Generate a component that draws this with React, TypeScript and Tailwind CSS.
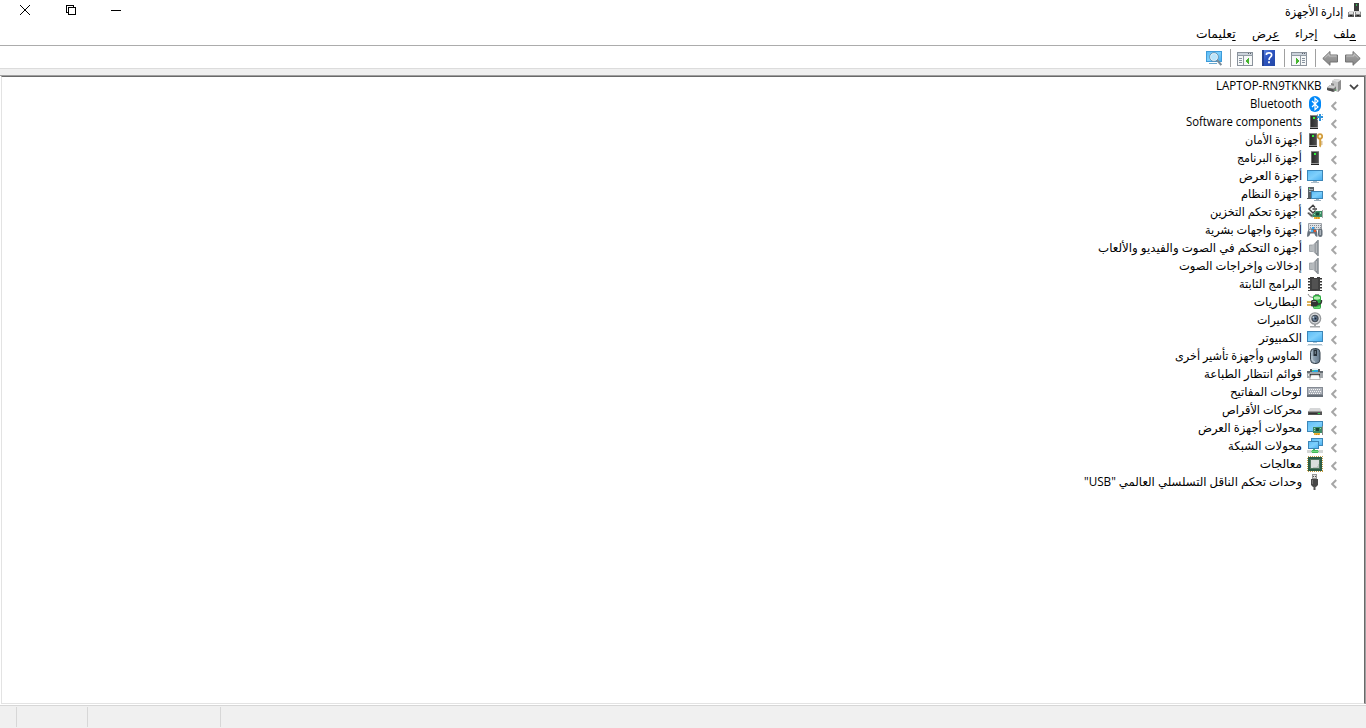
import { useLayoutEffect, useRef, useState, type ReactNode } from 'react';

/* Text that is condensed or widened to fill a known width. */
function Fit({ width, children }: { width: number; children: ReactNode }) {
  const ref = useRef<HTMLSpanElement>(null);
  const [scale, setScale] = useState(1);
  useLayoutEffect(() => {
    if (ref.current) setScale(width / ref.current.offsetWidth);
  }, [width]);
  return (
    <span className="block shrink-0" style={{ width }}>
      <span ref={ref} className="inline-block origin-right whitespace-nowrap" style={{ transform: `scaleX(${scale})` }}>
        {children}
      </span>
    </span>
  );
}

function Icon({ children, crisp = false }: { children: ReactNode; crisp?: boolean }) {
  return (
    <svg width="16" height="16" viewBox="0 0 16 16" fill="none" className="block shrink-0" shapeRendering={crisp ? 'crispEdges' : 'auto'}>
      {children}
    </svg>
  );
}

function Defs() {
  return (
    <svg width="0" height="0" className="absolute">
      <defs>
        <linearGradient id="screen" x1="0" y1="0" x2="1" y2="1">
          <stop offset="0" stopColor="#5cbcf6" />
          <stop offset=".5" stopColor="#7fd0fc" />
          <stop offset="1" stopColor="#45adf0" />
        </linearGradient>
        <linearGradient id="metal" x1="0" y1="0" x2="1" y2="0">
          <stop offset="0" stopColor="#c6cacd" />
          <stop offset=".6" stopColor="#989da2" />
          <stop offset="1" stopColor="#6d7479" />
        </linearGradient>
        <linearGradient id="tower" x1="0" y1="0" x2="1" y2="0">
          <stop offset="0" stopColor="#2c2c2c" />
          <stop offset="1" stopColor="#4a4a4a" />
        </linearGradient>
        <linearGradient id="help" x1="0" y1="0" x2="1" y2="1">
          <stop offset="0" stopColor="#668ce9" />
          <stop offset=".45" stopColor="#2d54c0" />
          <stop offset="1" stopColor="#2448a5" />
        </linearGradient>
        <linearGradient id="arrow" x1="0" y1="0" x2="0" y2="1">
          <stop offset="0" stopColor="#b8b8b8" />
          <stop offset=".5" stopColor="#969696" />
          <stop offset="1" stopColor="#858585" />
        </linearGradient>
        <linearGradient id="mouse" x1="0" y1="0" x2="1" y2="0">
          <stop offset="0" stopColor="#a9bac8" />
          <stop offset=".5" stopColor="#8397a8" />
          <stop offset="1" stopColor="#64788a" />
        </linearGradient>
      </defs>
    </svg>
  );
}

const TitleIcon = () => (
  <Icon crisp>
    <path d="M7 0h5v8H7z" fill="#3b3b3b" />
    <path d="M9 1h1v2H9z" fill="#31b853" />
    <path d="M2 8h12v1H2z" fill="#d4d4d4" />
    <path d="M1 9h6v5H1zM8 9h6v5H8z" fill="#8b8b8b" />
    <path d="M2 9h4v2H2zM9 9h4v2H9z" fill="#dedede" />
    <path d="M1 12h6v2H1zM8 12h6v2H8z" fill="#555" />
    <path d="M3 12h2v1H3zM10 12h2v1h-2z" fill="#222" />
  </Icon>
);

const RootIcon = () => (
  <Icon>
    <path d="M6 3l3-2 6 1v9l-3 3-6-3z" fill="#b4b4b4" />
    <path d="M6 3l3-2 6 1-3 2.2z" fill="#dcdcdc" />
    <path d="M6 3l6 1.2V14l-6-3z" fill="#c4c4c4" />
    <path d="M12 4.2L15 2v9l-3 3z" fill="#8e8e8e" />
    <path d="M1 9.5L4 7l6 1.5v4L7.5 14 1 12z" fill="#777" />
    <path d="M1 9.5L4 7l6 1.5-2.5 2z" fill="#cfcfcf" />
    <path d="M1 10l6.5 1.3v2.4L1 12z" fill="#4c4c4c" />
    <path d="M5 5l3 .7v2L5 7z" fill="#888" />
    <path d="M9 11.5h1.5v1H9z" fill="#52b95c" />
  </Icon>
);

const Bluetooth = () => (
  <Icon>
    <rect x="2" y="0" width="12" height="16" rx="6" fill="#0088f8" />
    <path d="M5 5l6 6-3 2.6V2.4L11 5l-6 6" stroke="#fff" strokeWidth="1.2" />
  </Icon>
);

const Tower = ({ x }: { x: number }) => (
  <g transform={`translate(${x} 0)`} shapeRendering="crispEdges">
    <path d="M0 1h8v1H0z" fill="#8c8c8c" />
    <path d="M0 2h1v11H0zM7 2h1v11H7z" fill="#6a6a6a" />
    <path d="M1 2h6v11H1z" fill="url(#tower)" />
    <path d="M0 13h8v1H0z" fill="#9a9a9a" />
    <path d="M0 14h8v1H0z" fill="#222" />
    <path d="M3 3h2v2H3z" fill="#31f53b" />
  </g>
);

const Software = () => (
  <Icon>
    <Tower x={3} />
    <path d="M12 0h2v2h2v2h-2v3h-2V4h-2V2h2z" fill="#2f93dc" shapeRendering="crispEdges" />
    <path d="M10 0h1v1h-1zM15 0h1v1h-1zM15 5h1v1h-1zM10 5h1v1h-1z" fill="#8ac3ea" />
  </Icon>
);

const Security = () => (
  <Icon>
    <Tower x={2} />
    <path d="M12.2 6h2v8l-1 1.4-1-1.4z" fill="#d5a13f" />
    <circle cx="13" cy="4.4" r="2.2" stroke="#d19c3c" strokeWidth="1.8" fill="#fff8e0" />
    <path d="M14.2 9.5h1.3v1h-1.3zM14.2 11.5h1.3v1h-1.3z" fill="#b4812d" />
  </Icon>
);

const Program = () => <Icon><Tower x={4} /></Icon>;

const Display = () => (
  <Icon>
    <rect x=".5" y="2.5" width="15" height="10" fill="url(#screen)" stroke="#3c86b8" />
    <path d="M6 13h4v1h2v1H4v-1h2z" fill="#a9bbc8" />
  </Icon>
);

const System = () => (
  <Icon crisp>
    <path d="M1 1h6v12H1z" fill="#5a6268" />
    <path d="M2 3h4v1H2zM2 5h3v1H2z" fill="#a9b4bc" />
    <path d="M2 2h1v1H2z" fill="#4be45a" />
    <path d="M0 12h6v1H0z" fill="#555" />
    <rect x="4.5" y="5.5" width="11" height="7" fill="url(#screen)" stroke="#3c86b8" />
    <path d="M9 13h3v1h2v1H7v-1h2z" fill="#9caebb" />
  </Icon>
);

const Storage = () => (
  <Icon>
    <path d="M8 3.5L6 1.2 2 5l4 4 2.5-2.4M5.5 5H10" stroke="#404040" strokeWidth="1.4" />
    <path d="M0 9l2-1 4 3v2.5L4 13z" fill="#8b8b8b" />
    <path d="M1 9l4 3" stroke="#444" />
    <path d="M5 11l4-4h6v6H6z" fill="#3b8c64" />
    <path d="M9 8.5h3v3H9z" fill="#1e4a38" />
    <path d="M13 8h1v2h-1zM7 10h1v1H7z" fill="#92d4b0" />
    <path d="M7 13h6v2H7z" fill="#f2b234" />
    <path d="M9.5 13v2M11.5 13v2" stroke="#b27817" strokeWidth=".5" />
    <path d="M15 6h1v8h-1z" fill="#aaa" />
  </Icon>
);

const Human = () => (
  <Icon>
    <path d="M1.5 1.5h13v6h-13z" fill="#dfe2e5" stroke="#9ba0a6" />
    <path d="M3 3.5h11M3 5.5h11" stroke="#858b92" strokeDasharray="1 1" />
    <path d="M0 14.5Q0 8 3 6.6h5Q10.500 8 10.500 14.500q-2 1-3.200-3H3.400Q2.200 15.500 0 14.500z" fill="#69737e" />
    <circle cx="3.4" cy="8.600" r="1.200" fill="#e8edf1" />
    <path d="M5 5h2v2H5z" fill="#2fa0f0" />
    <path d="M4 8h2v2H4z" fill="#48b3f3" />
    <path d="M7 8h2v2H7z" fill="#e5572f" />
    <rect x="11" y="6.5" width="4.500" height="8.500" rx="2.200" fill="#67717b" />
    <path d="M12.500 8h1.500v5h-1.500z" fill="#a9b2ba" />
  </Icon>
);

const Sound = () => (
  <Icon>
    <path d="M2.500 5h3.500v6.500H2.500z" fill="#b5babd" stroke="#8a9196" strokeWidth=".7" />
    <path d="M5.500 5l5-4.700v15.500l-5-4.500z" fill="url(#metal)" />
    <path d="M11 0v16" stroke="#7b848a" strokeWidth="1.400" />
    <path d="M9.500 3v10" stroke="#c8cccf" strokeWidth=".7" />
  </Icon>
);

const Firmware = () => (
  <Icon crisp>
    <path d="M3 1h4v1h3V1h3v14H3z" fill="#404040" />
    <path d="M1 2h2v1H1zM1 5h2v1H1zM1 8h2v1H1zM1 11h2v1H1zM1 14h2v1H1zM13 2h2v1h-2zM13 5h2v1h-2zM13 8h2v1h-2zM13 11h2v1h-2zM13 14h2v1h-2z" fill="#333" />
    <path d="M5 3h6v10H5z" fill="#525252" />
    <path d="M1 3h2v1H1zM1 6h2v1H1zM1 9h2v1H1zM1 12h2v1H1zM13 3h2v1h-2zM13 6h2v1h-2zM13 9h2v1h-2zM13 12h2v1h-2z" fill="#999" />
  </Icon>
);

const Battery = () => (
  <Icon>
    <path d="M8 0h4v2H8z" fill="#8b8b8b" />
    <rect x="6" y="1" width="8" height="14" rx="2" fill="#2cab3f" />
    <path d="M7 3q3-1.500 6 0v2q-3 1.500-6 0z" fill="#b2f0b0" />
    <path d="M7 12q3 1.500 6 0v2q-3 1-6 0z" fill="#6bda72" />
    <path d="M1 0q1 3.500 5 3.500" stroke="#888" />
    <path d="M4 7l1-1h4l2 2v3l-2 1.500H5L4 12z" fill="#333" />
    <path d="M0 8h4M0 11h4" stroke="#d39a25" strokeWidth="1.400" />
    <path d="M11 10q4 .5 3.500-4" stroke="#333" strokeWidth="1.400" />
    <path d="M5.500 7.500h3.500" stroke="#919191" />
  </Icon>
);

const Camera = () => (
  <Icon>
    <path d="M7 12h2v2h4v1.500H3V14h4z" fill="#a5a8aa" />
    <circle cx="8" cy="6.500" r="6.300" fill="#96999c" />
    <circle cx="8" cy="6.500" r="4.900" fill="#e0e2e4" />
    <circle cx="8" cy="6.500" r="3.700" fill="#49525c" />
    <circle cx="8" cy="6.500" r="2.200" fill="#7088a5" />
    <path d="M7.500 5.500h2v2h-2z" fill="#182432" />
    <path d="M5.500 4.500h1.500v1.500H5.500z" fill="#c5d7e1" />
  </Icon>
);

const Computer = () => (
  <Icon>
    <rect x=".5" y="1.500" width="15" height="10" fill="url(#screen)" stroke="#3c86b8" />
    <path d="M6 12h4v1H6z" fill="#a6c7db" />
    <path d="M1 14h14v1H1z" fill="#a8bdca" />
    <path d="M0 15h16v1H0z" fill="#dde6ec" />
  </Icon>
);

const Mouse = () => (
  <Icon>
    <rect x="3.500" y=".5" width="9.500" height="15" rx="4" fill="url(#mouse)" stroke="#39454f" />
    <path d="M6.500 1.500h3.500V8H6.500z" fill="#28323b" />
    <path d="M8.300 3v3" stroke="#71818d" strokeWidth="1.200" />
    <path d="M5 8v3q.500 2.500 3 3" stroke="#c1ccd4" />
  </Icon>
);

const Printer = () => (
  <Icon>
    <path d="M3 3h10v4H3z" fill="#555c62" />
    <path d="M5 2h6v2H5z" fill="#e9f3f6" />
    <path d="M5 4h6v2H5z" fill="#28a9de" />
    <path d="M5 4h2v1H5z" fill="#54c661" />
    <path d="M0 6h16v6H0z" fill="#a2a7ab" />
    <path d="M0 5h3v2H0zM13 5h3v2h-3z" fill="#656c72" />
    <path d="M3 8h10v3H3z" fill="#343434" />
    <path d="M4 9h8l1.300 4.500H2.700z" fill="#fcfcfc" stroke="#919191" strokeWidth=".6" />
    <path d="M1 8h1v2H1z" fill="#e8e8e8" />
  </Icon>
);

const Keyboard = () => (
  <Icon crisp>
    <path d="M0 3h16v10H0z" fill="#858b94" />
    <path d="M1 4h14v6H1z" fill="#aeb3bb" />
    <path d="M2 5.500h12M3 7.500h11M2 9.500h12" stroke="#f6f6f6" strokeDasharray="1 1" />
    <path d="M0 11h16v2H0z" fill="#666e77" />
  </Icon>
);

const Disk = () => (
  <Icon>
    <path d="M3 6h10l2 4H1z" fill="#d6d7d8" />
    <path d="M1 9.500h14V13H1z" fill="#555" />
    <path d="M1 9h14v1H1z" fill="#999" />
    <path d="M2 11h8v1H2z" fill="#333" />
    <path d="M11 11h2v1h-2z" fill="#28e34b" />
  </Icon>
);

const DisplayAdapter = () => (
  <Icon crisp>
    <rect x=".5" y="1.500" width="15" height="10" fill="url(#screen)" stroke="#3c86b8" />
    <path d="M6 7h9v6H6z" fill="#3c8b66" />
    <path d="M9 8h3v3H9z" fill="#1b4838" />
    <path d="M7 8h1v1H7zM13 8h1v1h-1zM7 10h1v1H7z" fill="#a5d4b8" />
    <path d="M7 13h6v2H7z" fill="#f2b234" />
    <path d="M9 14h1v1H9zM11 14h1v1h-1z" fill="#c68b20" />
    <path d="M15 6h1v9h-1z" fill="#888" />
  </Icon>
);

const Network = () => (
  <Icon crisp>
    <rect x="4.500" y=".5" width="11" height="7" fill="url(#screen)" stroke="#3c86b8" />
    <rect x="1.500" y="3.500" width="10" height="7" fill="url(#screen)" stroke="#3c86b8" />
    <path d="M6 11h2v1H6z" fill="#43b77b" />
    <path d="M0 12h16v3H0z" fill="#d3d6d5" />
    <path d="M5 12h6v3H5z" fill="#43bb5a" />
    <path d="M4 13h8v1H4z" fill="#74d681" />
  </Icon>
);

const Processor = () => (
  <Icon crisp>
    <rect x=".5" y=".5" width="15" height="15" stroke="#c49d42" strokeDasharray="1 1" />
    <path d="M1 1h14v14H1z" fill="#2b5c46" />
    <path d="M4 4h8v8H4z" fill="#dadedd" />
    <path d="M3.500 3.500h9v9h-9z" stroke="#52765f" />
    <path d="M6 11h4v-1h1V8h1v4H6z" fill="#bac2bf" />
  </Icon>
);

const Usb = () => (
  <Icon>
    <path d="M5 0h5v5H5z" fill="#969696" />
    <path d="M6 1h3v3H6z" fill="#dedede" />
    <path d="M6 2h1v1H6zM8 2h1v1H8z" fill="#555" />
    <path d="M4 5h7v6l-2 2H6l-2-2z" fill="#484848" />
    <path d="M5 6h1v4H5z" fill="#777" />
    <path d="M6.500 12h2v4h-2z" fill="#555" />
  </Icon>
);

function Arrow({ left = false }: { left?: boolean }) {
  return (
    <Icon>
      <path d={left ? 'M.8 8.500L8 1.500v3.500h7.500v7H8v3.300z' : 'M15.2 8.500L8 1.500v3.500H.5v7H8v3.300z'} fill="url(#arrow)" stroke="#737373" />
      <path d={left ? 'M2.500 8L7 3.800V6h7.500' : 'M1.500 6H9V3.800L13.500 8'} stroke="#c9c9c9" strokeWidth=".8" />
    </Icon>
  );
}

function PaneIcon({ left = false }: { left?: boolean }) {
  return (
    <Icon crisp>
      <path d="M0 2h16v14H0z" fill="#8a929b" />
      <path d="M1 3h14v2H1z" fill="#cbd2da" />
      <path d="M11 3h1v1h-1zM13 3h1v1h-1z" fill="#59616a" />
      <path d="M1 6h14v9H1z" fill="#f6f8f8" />
      <path d="M0 5h16v1H0z" fill="#919ba4" />
      <path d={left ? 'M6 6h1v9H6z' : 'M9 6h1v9H9z'} fill="#909aa3" />
      <path d={left ? 'M2 8.500h3M2 10.500h3M2 12.500h3' : 'M11 8.500h3M11 10.500h3M11 12.500h3'} stroke="#8793a0" />
      <path d={left ? 'M12 8v6l-3.500-3z' : 'M5 8v6l3.500-3z'} fill="#45b52e" />
    </Icon>
  );
}

const HelpIcon = () => (
  <Icon>
    <path d="M1 0h13v16H1z" fill="url(#help)" />
    <path d="M1 0h2v16H1z" fill="#254293" />
    <path d="M5.500 5V4q0-1.200 2.600-1.200T10.600 5q0 1.200-1.200 2.100T8 9.800M8 11.200v2" stroke="#fff" strokeWidth="1.800" />
  </Icon>
);

const ScanIcon = () => (
  <Icon>
    <rect x="0" y="1" width="16" height="11" fill="#3d9bd9" />
    <rect x="1" y="2" width="14" height="9" fill="url(#screen)" />
    <path d="M3 13h8v1H3z" fill="#6aa9d0" />
    <circle cx="8" cy="7" r="3.700" fill="#b9e4fb" stroke="#e6f2f8" strokeWidth="1.200" />
    <circle cx="8" cy="7" r="4.400" stroke="#5d89a8" strokeWidth=".8" />
    <path d="M11 10l4.300 5" stroke="#7c8c98" strokeWidth="2" />
  </Icon>
);

const devices = [
  { label: 'Bluetooth', width: 52, Glyph: Bluetooth },
  { label: 'Software components', width: 116, Glyph: Software },
  { label: 'أجهزة الأمان', width: 57, Glyph: Security },
  { label: 'أجهزة البرنامج', width: 65, Glyph: Program },
  { label: 'أجهزة العرض', width: 63, Glyph: Display },
  { label: 'أجهزة النظام', width: 61, Glyph: System },
  { label: 'أجهزة تحكم التخزين', width: 92, Glyph: Storage },
  { label: 'أجهزة واجهات بشرية', width: 97, Glyph: Human },
  { label: 'أجهزه التحكم في الصوت والفيديو والألعاب', width: 204, Glyph: Sound },
  { label: 'إدخالات وإخراجات الصوت', width: 123, Glyph: Sound },
  { label: 'البرامج الثابتة', width: 63, Glyph: Firmware },
  { label: 'البطاريات', width: 48, Glyph: Battery },
  { label: 'الكاميرات', width: 45, Glyph: Camera },
  { label: 'الكمبيوتر', width: 43, Glyph: Computer },
  { label: 'الماوس وأجهزة تأشير أخرى', width: 127, Glyph: Mouse },
  { label: 'قوائم انتظار الطباعة', width: 98, Glyph: Printer },
  { label: 'لوحات المفاتيح', width: 72, Glyph: Keyboard },
  { label: 'محركات الأقراص', width: 80, Glyph: Disk },
  { label: 'محولات أجهزة العرض', width: 104, Glyph: DisplayAdapter },
  { label: 'محولات الشبكة', width: 74, Glyph: Network },
  { label: 'معالجات', width: 42, Glyph: Processor },
  { label: 'وحدات تحكم الناقل التسلسلي العالمي "USB"', width: 218, Glyph: Usb },
];

const menus = [
  { first: 'م', rest: 'لف', width: 23 },
  { first: 'إ', rest: 'جراء', width: 22 },
  { first: 'ع', rest: 'رض', width: 27 },
  { first: 'ت', rest: 'عليمات', width: 40 },
];

const Divider = () => <span className="h-[18px] w-px bg-[#a0a0a0]" />;

export default function App() {
  return (
    <div dir="rtl" className="flex h-[728px] w-[1366px] flex-col overflow-hidden bg-white font-['Open_Sans','DejaVu_Sans',sans-serif] text-[12px] leading-[18px] text-black">
      <Defs />
      <header className="flex h-[25px] shrink-0 justify-between pr-[3px]">
        <div className="flex gap-1 pt-[3px]">
          <TitleIcon />
          <Fit width={58}>إدارة الأجهزة</Fit>
        </div>
        <div dir="ltr" className="flex pt-[5px] pl-5">
          <svg width="10" height="10" viewBox="0 0 10 10" stroke="#000"><path d="M0 0l10 10M10 0L0 10" /></svg>
          <svg width="10" height="10" viewBox="0 0 10 10" fill="none" stroke="#000" shapeRendering="crispEdges" className="ml-9"><path d="M2.500 7.500h-2v-7h7v2M2.500 2.500h7v7h-7z" /></svg>
          <svg width="10" height="10" viewBox="0 0 10 10" stroke="#000" shapeRendering="crispEdges" className="ml-[35px]"><path d="M0 5.500h10" /></svg>
        </div>
      </header>

      <nav className="flex h-5 shrink-0 gap-4 pr-[10px]">
        {menus.map((m) => (
          <Fit key={m.rest} width={m.width}>
            <span className="underline decoration-1 underline-offset-2 [text-decoration-skip-ink:none]">{m.first}</span>
            {m.rest}
          </Fit>
        ))}
      </nav>

      <div className="flex h-6 shrink-0 items-center border-y border-t-[#acacac] border-b-[#dcdcdc] pr-[5px] pt-[2px]">
        <Arrow />
        <span className="w-[7px]" />
        <Arrow left />
        <span className="w-[6px]" />
        <Divider />
        <span className="w-[8px]" />
        <PaneIcon />
        <span className="w-[6px]" />
        <Divider />
        <span className="w-[7px]" />
        <HelpIcon />
        <span className="w-[8px]" />
        <PaneIcon left />
        <span className="w-[6px]" />
        <Divider />
        <span className="w-[8px]" />
        <ScanIcon />
      </div>
      <div className="h-[6px] shrink-0 bg-[#f0f0f0]" />

      <main className="flex h-[629px] shrink-0 flex-col border-t border-r border-t-[#a0a0a0] border-r-[#a0a0a0] pl-px">
        <div className="flex h-[628px] flex-col border border-t-[#696969] border-r-[#696969] border-b-[#e3e3e3] border-l-[#e3e3e3]">
          <div className="flex h-[18px] shrink-0 items-center pr-[5px]">
            <svg width="10" height="6" viewBox="0 0 10 6" fill="none" stroke="#444" strokeWidth="1.800" className="mt-px"><path d="M1 .8l4 4 4-4" /></svg>
            <span className="w-[7px]" />
            <RootIcon />
            <span className="w-[5px]" />
            <Fit width={106}>LAPTOP-RN9TKNKB</Fit>
          </div>
          {devices.map(({ label, width, Glyph }) => (
            <div key={label} className="flex h-[18px] shrink-0 items-center pr-[27px]">
              <svg width="6" height="10" viewBox="0 0 6 10" fill="none" stroke="#a6a6a6" strokeWidth="2" className="mt-[3px]"><path d="M5.200 1L1.200 5l4 4" /></svg>
              <span className="w-[8px]" />
              <Glyph />
              <span className="w-[5px]" />
              <Fit width={width}>{label}</Fit>
            </div>
          ))}
        </div>
      </main>

      <footer dir="ltr" className="mt-px flex h-[23px] shrink-0 border-t border-[#d7d7d7] bg-[#f0f0f0] pt-px">
        <span className="h-5 w-[17px] border-r border-[#d7d7d7]" />
        <span className="h-5 w-[71px] border-r border-[#d7d7d7]" />
        <span className="h-5 w-[133px] border-r border-[#d7d7d7]" />
      </footer>
    </div>
  );
}
